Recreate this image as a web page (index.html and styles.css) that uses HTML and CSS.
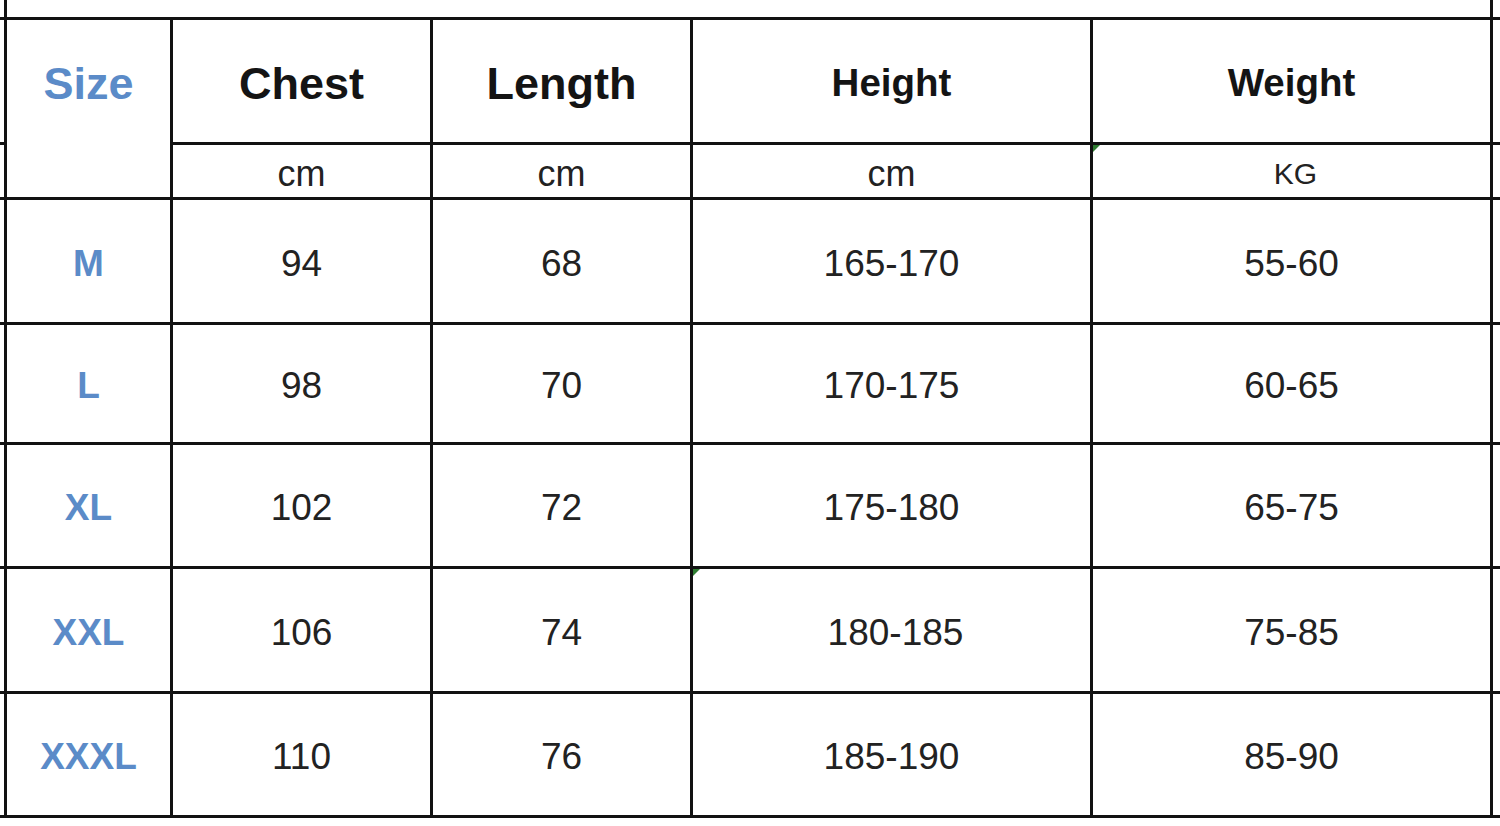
FILE: index.html
```html
<!DOCTYPE html>
<html lang="en">
<head>
<meta charset="utf-8">
<title>Size chart</title>
<link rel="stylesheet" href="styles.css">
</head>
<body>
<div class="chart">
  <div class="stub"></div><div class="top-space"></div><div class="stub"></div>

  <div class="stub"></div>
  <div class="cell size-cell"><div class="size-label">Size</div></div>
  <div class="cell head big">Chest</div>
  <div class="cell head big">Length</div>
  <div class="cell head mid">Height</div>
  <div class="cell head mid">Weight</div>
  <div class="stub"></div>

  <div class="stub"></div>
  <div class="cell unit">cm</div>
  <div class="cell unit">cm</div>
  <div class="cell unit">cm</div>
  <div class="cell unit kg note">KG</div>
  <div class="stub"></div>

  <div class="stub"></div>
  <div class="cell label">M</div>
  <div class="cell num">94</div>
  <div class="cell num">68</div>
  <div class="cell num">165-170</div>
  <div class="cell num">55-60</div>
  <div class="stub"></div>

  <div class="stub"></div>
  <div class="cell label">L</div>
  <div class="cell num">98</div>
  <div class="cell num">70</div>
  <div class="cell num">170-175</div>
  <div class="cell num">60-65</div>
  <div class="stub"></div>

  <div class="stub"></div>
  <div class="cell label">XL</div>
  <div class="cell num">102</div>
  <div class="cell num">72</div>
  <div class="cell num">175-180</div>
  <div class="cell num">65-75</div>
  <div class="stub"></div>

  <div class="stub"></div>
  <div class="cell label">XXL</div>
  <div class="cell num">106</div>
  <div class="cell num">74</div>
  <div class="cell num note shift">180-185</div>
  <div class="cell num">75-85</div>
  <div class="stub"></div>

  <div class="stub"></div>
  <div class="cell label">XXXL</div>
  <div class="cell num">110</div>
  <div class="cell num">76</div>
  <div class="cell num">185-190</div>
  <div class="cell num">85-90</div>
  <div class="stub"></div>

  <div class="bottom-space"></div>
</div>
</body>
</html>
```

FILE: styles.css
```css
html, body {
  margin: 0;
  padding: 0;
  background: #ffffff;
}

.chart {
  width: 1500px;
  height: 826px;
  display: grid;
  grid-template-columns: 4px 163px 257px 257px 397px 397px 7px;
  grid-template-rows: 17px 122px 52px 122px 117px 121px 122px 121px 8px;
  gap: 3px;
  background: #121212;
  font-family: "Liberation Sans", Arial, sans-serif;
  overflow: hidden;
}

.stub,
.cell,
.top-space,
.bottom-space {
  background: #ffffff;
}

.top-space {
  grid-column: 2 / 7;
}

.bottom-space {
  grid-column: 1 / 8;
}

.cell {
  position: relative;
  display: flex;
  align-items: center;
  justify-content: center;
  line-height: 1;
  padding-top: 5px;
  box-sizing: border-box;
  color: #1c1c1c;
}

.size-cell {
  grid-column: 2;
  grid-row: 2 / 4;
  align-items: flex-start;
  padding-top: 0;
}

.size-label {
  height: 122px;
  padding-top: 5px;
  box-sizing: border-box;
  display: flex;
  align-items: center;
  font-weight: bold;
  font-size: 45px;
  color: #5b8bc8;
}

.head {
  font-weight: bold;
  color: #141414;
}

.head.big {
  font-size: 45px;
}

.head.mid {
  font-size: 38.5px;
}

.unit {
  font-size: 36px;
  color: #222222;
}

.unit.kg {
  font-size: 30px;
  padding-left: 8px;
}

.label {
  font-weight: bold;
  font-size: 37px;
  color: #5b8bc8;
  padding-top: 4px;
}

.num {
  font-size: 37px;
  color: #222222;
  padding-top: 4px;
}

.num.shift {
  padding-left: 8px;
}

.note::before {
  content: "";
  position: absolute;
  top: 0;
  left: 0;
  width: 0;
  height: 0;
  border-top: 7px solid #2f7d32;
  border-right: 7px solid transparent;
}
```
